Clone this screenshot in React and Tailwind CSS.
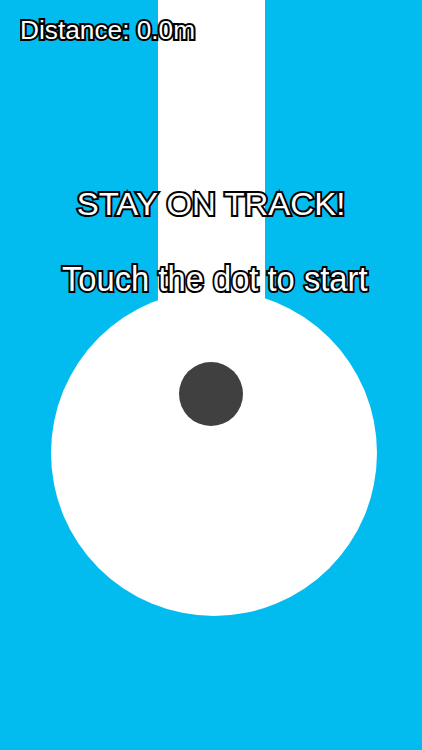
import React from 'react';

const outline = 'text-white [-webkit-text-stroke:4px_#000] [paint-order:stroke_fill]';

const App = () => {
  return (
    <div className="relative h-[750px] w-full overflow-hidden bg-[#02bbef] font-['Liberation_Sans',Arial,sans-serif]">
      {/* track + start circle */}
      <div className="flex flex-col items-center">
        <div className="h-[300px] w-[107px] bg-white" />
        <div className="-mt-[10px] ml-[6px] flex h-[326px] w-[326px] justify-center rounded-full bg-white pt-[72px]">
          <div className="-ml-[6px] h-[64px] w-[64px] rounded-full bg-[#404040]" />
        </div>
      </div>

      {/* HUD */}
      <div className="absolute inset-0 flex flex-col">
        <p className={`ml-[20px] mt-[18px] w-fit origin-left scale-x-[1.05] text-[25px] leading-none ${outline}`}>Distance: 0.0m</p>
        <h1 className={`mt-[145px] scale-x-[1.03] text-center text-[32px] leading-none ${outline}`}>STAY ON TRACK!</h1>
        <p className={`mt-[41px] scale-x-[0.935] pl-[8px] text-center text-[35px] leading-none ${outline}`}>Touch the dot to start</p>
      </div>
    </div>
  );
};

export default App;
